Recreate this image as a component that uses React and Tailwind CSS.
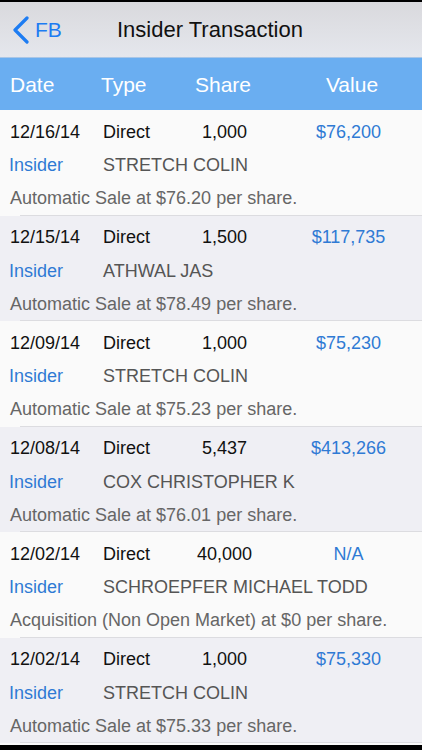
const rows = [
  { date: "12/16/14", type: "Direct", share: "1,000", value: "$76,200", name: "STRETCH COLIN", desc: "Automatic Sale at $76.20 per share." },
  { date: "12/15/14", type: "Direct", share: "1,500", value: "$117,735", name: "ATHWAL JAS", desc: "Automatic Sale at $78.49 per share." },
  { date: "12/09/14", type: "Direct", share: "1,000", value: "$75,230", name: "STRETCH COLIN", desc: "Automatic Sale at $75.23 per share." },
  { date: "12/08/14", type: "Direct", share: "5,437", value: "$413,266", name: "COX CHRISTOPHER K", desc: "Automatic Sale at $76.01 per share." },
  { date: "12/02/14", type: "Direct", share: "40,000", value: "N/A", name: "SCHROEPFER MICHAEL TODD", desc: "Acquisition (Non Open Market) at $0 per share." },
  { date: "12/02/14", type: "Direct", share: "1,000", value: "$75,330", name: "STRETCH COLIN", desc: "Automatic Sale at $75.33 per share." },
];

export default function App() {
  return (
    <div className="w-[422px] h-[750px] overflow-hidden bg-black flex flex-col" style={{ fontFamily: '"Liberation Sans", Arial, sans-serif' }}>
      <div className="h-[2px] shrink-0 bg-black" />
      <div className="h-[56px] shrink-0 flex items-center relative bg-gradient-to-b from-[#d9d9dd] to-[#e5e7ed] border-b border-[#a9c6e6]">
        <div className="flex items-center pl-[11px]">
          <svg width="20" height="28" viewBox="0 0 20 28" className="mt-[1px]">
            <path d="M16 2 L4 14 L16 26" fill="none" stroke="#1d7cf2" strokeWidth="3.2" strokeLinecap="round" strokeLinejoin="round" />
          </svg>
          <span className="ml-[4px] text-[21px] text-[#1d7cf2] leading-none">FB</span>
        </div>
        <div className="absolute left-[117px] top-0 h-full flex items-center text-[22px] text-[#111] leading-none">Insider Transaction</div>
      </div>
      <div className="h-[52px] shrink-0 bg-[#6aaef1] flex items-center text-white text-[21px] leading-none">
        <div className="w-[91px] shrink-0 pl-[10px]">Date</div>
        <div className="w-[86px] shrink-0 pl-[10px]">Type</div>
        <div className="w-[92px] shrink-0 text-center">Share</div>
        <div className="flex-1 pl-[13px] text-center">Value</div>
      </div>
      {rows.map((r, i) => (
        <div key={i} className={`h-[105.5px] shrink-0 relative flex flex-col pt-[5px] text-[18px] ${i % 2 === 0 ? "bg-[#fafafa]" : "bg-[#efeff4]"}`}>
          <div className="h-[34px] flex items-center text-[#111]">
            <div className="w-[93px] shrink-0 pl-[10px]">{r.date}</div>
            <div className="w-[85px] shrink-0 pl-[10px]">{r.type}</div>
            <div className="w-[93px] shrink-0 text-center">{r.share}</div>
            <div className="flex-1 pl-[4px] text-center text-[#2f7ad4]">{r.value}</div>
          </div>
          <div className="h-[33px] flex items-center">
            <div className="w-[103px] shrink-0 pl-[9px] text-[#2f7ad4]">Insider</div>
            <div className="text-[#555]">{r.name}</div>
          </div>
          <div className="h-[33px] flex items-center pl-[10px] text-[#666]">{r.desc}</div>
          <div className="absolute left-[20px] right-0 bottom-0 h-[1px] bg-[#dcdce0]" />
        </div>
      ))}
      <div className="h-[2px] shrink-0 bg-[#fafafa]" />
      <div className="flex-1 bg-black" />
    </div>
  );
}
